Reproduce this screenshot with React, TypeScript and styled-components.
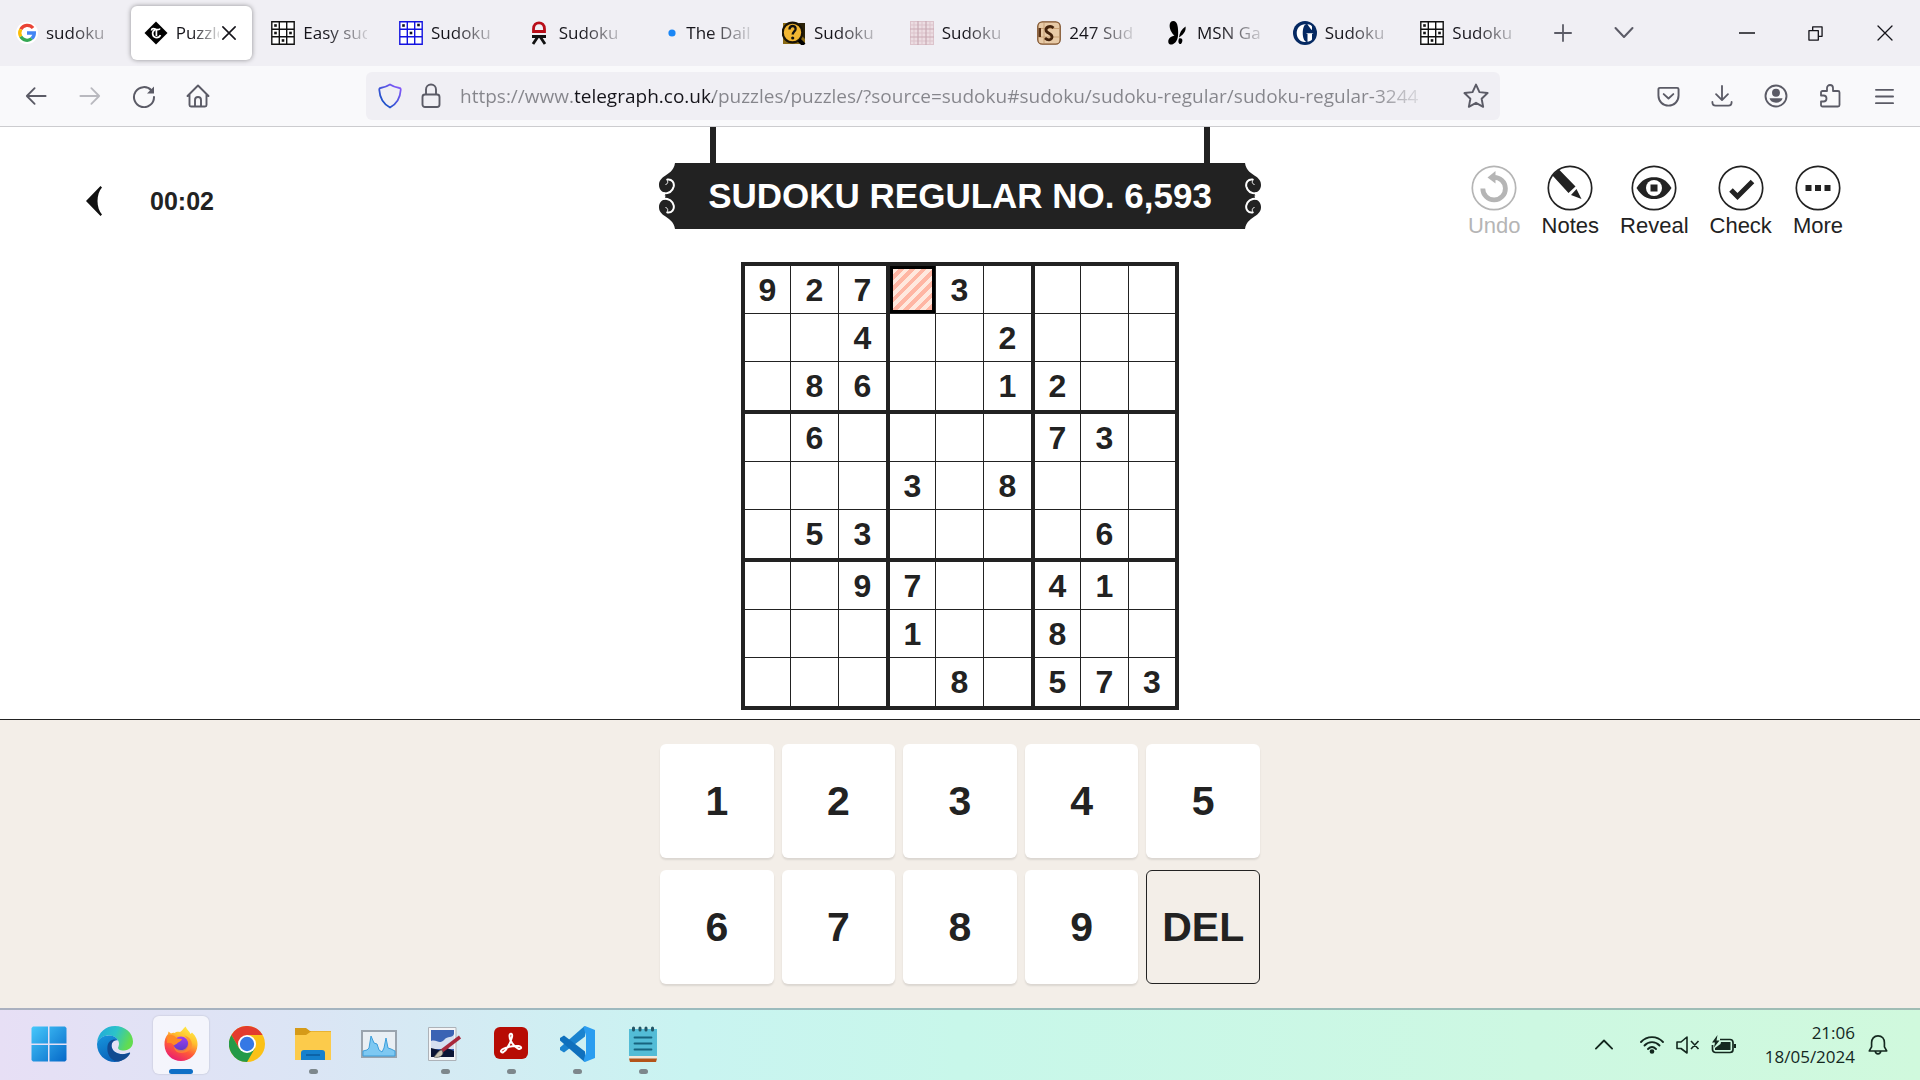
import React from "react";
import styled, { createGlobalStyle, css } from "styled-components";

const ui = `"Open Sans", "Noto Sans", sans-serif`;
const grotesk = `"Liberation Sans", Arial, sans-serif`;
const ink = "#222222";

const GlobalStyle = createGlobalStyle`
  * { box-sizing: border-box; }
  body { margin: 0; background: #fff; font-family: ${ui}; }
  button { font: inherit; color: inherit; background: none; border: 0; padding: 0; margin: 0; cursor: pointer; }
  svg { display: block; flex: none; }
`;

const Screen = styled.div`
  min-height: 100vh;
  display: flex;
  flex-direction: column;
`;

/* ---------- browser chrome ---------- */

const TabStrip = styled.header`
  height: 66px;
  display: flex;
  align-items: center;
  background: #f0eff4;
  color: #15141a;
`;

const Tabs = styled.nav`
  flex: 1;
  display: grid;
  grid-template-columns: repeat(12, minmax(0, 1fr));
`;

const Tab = styled.div<{ $active?: boolean }>`
  height: 54px;
  margin: 0 3px;
  padding: 0 13px;
  display: flex;
  align-items: center;
  border-radius: 6px;
  ${(p) => p.$active && css`
    background: #fff;
    box-shadow: 0 0 5px rgba(0, 0, 0, 0.4);
  `}
`;

const TabButton = styled.button`
  flex: 1;
  min-width: 0;
  height: 100%;
  display: flex;
  align-items: center;
  gap: 8px;
`;

const TabLabel = styled.span`
  flex: 1;
  overflow: hidden;
  white-space: nowrap;
  text-align: left;
  font-size: 17px;
  line-height: 24px;
  mask-image: linear-gradient(to right, #000 35%, rgba(0, 0, 0, 0.15));
`;

const CloseTab = styled.button`
  width: 20px;
  height: 24px;
  display: grid;
  place-items: center;
`;

const StripTools = styled.div`
  width: 122px;
  display: flex;
`;

const StripButton = styled.button`
  flex: 1;
  height: 48px;
  display: grid;
  place-items: center;
`;

const WindowControls = styled.div`
  width: 208px;
  margin-left: 58px;
  display: flex;
`;

const NavBar = styled.div`
  height: 61px;
  padding: 0 9px;
  display: grid;
  grid-template-columns: 357px minmax(0, 1fr) 411px;
  align-items: center;
  background: #f9f9fb;
  border-bottom: 1px solid #cccccf;
  color: #5b5b66;
`;

const NavGroup = styled.div<{ $end?: boolean }>`
  display: flex;
  justify-content: ${(p) => (p.$end ? "flex-end" : "flex-start")};
`;

const NavButton = styled.button<{ $dim?: boolean }>`
  width: 54px;
  height: 48px;
  display: grid;
  place-items: center;
  opacity: ${(p) => (p.$dim ? 0.4 : 1)};
`;

const UrlBar = styled.form`
  height: 48px;
  padding: 0 11px 0 12px;
  display: flex;
  align-items: center;
  gap: 19px;
  border-radius: 6px;
  background: #f0eff4;
`;

/* The host name is dark and the rest of the address grey, fading at the right edge. */
const UrlInput = styled.input`
  flex: 1;
  min-width: 0;
  height: 40px;
  padding: 0;
  border: 0;
  outline: 0;
  font-family: ${ui};
  font-size: 19px;
  color: transparent;
  background: linear-gradient(
    to right,
    #85858b 0 115px,
    #15141a 115px 253px,
    #85858b 253px calc(100% - 70px),
    rgba(133, 133, 139, 0.1) calc(100% - 20px)
  );
  background-clip: text;
`;

/* ---------- puzzle ---------- */

const Puzzle = styled.main`
  flex: 1;
  display: flex;
  flex-direction: column;
  align-items: center;
  background: #fff;
  color: ${ink};
  font-family: ${grotesk};
`;

const PuzzleHead = styled.div`
  width: 100%;
  padding: 0 77px;
  display: grid;
  grid-template-columns: minmax(0, 1fr) 602px minmax(0, 1fr);
`;

const HeadLeft = styled.div`
  height: 102px;
  padding-top: 46px;
  display: flex;
  align-items: center;
  gap: 39px;
`;

const BackButton = styled.button`
  width: 34px;
  height: 40px;
  display: grid;
  place-items: center;
`;

const Timer = styled.time`
  font-size: 25px;
  line-height: 32px;
  font-weight: 700;
`;

const Sign = styled.div`
  display: flex;
  flex-direction: column;
`;

const Hangers = styled.div`
  height: 36px;
  margin: 0 51px;
  border: solid ${ink};
  border-width: 0 6px;
`;

const Board = styled.div`
  height: 66px;
  display: flex;
`;

const SignTitle = styled.h1`
  flex: 1;
  margin: 0;
  background: ${ink};
  color: #fff;
  font-size: 35px;
  line-height: 66px;
  font-weight: 700;
  text-align: center;
  white-space: nowrap;
`;

const Tools = styled.div`
  display: flex;
  justify-content: flex-end;
  align-items: flex-start;
  gap: 21px;
  padding-top: 38px;
`;

const Tool = styled.button<{ $off?: boolean }>`
  display: flex;
  flex-direction: column;
  align-items: center;
  gap: 2px;
  font-size: 22px;
  line-height: 26px;
  color: ${(p) => (p.$off ? "#b5b5b5" : ink)};
`;

const Grid = styled.table`
  margin: 23px 0 9px;
  border: 4px solid ${ink};
  border-collapse: separate;
  border-spacing: 0;
`;

const Cell = styled.td<{ $col: number; $row: number }>`
  padding: 0;
  width: ${(p) => (p.$col === 8 ? 46 : [46, 48, 51][p.$col % 3])}px;
  height: ${(p) => (p.$row !== 8 && p.$row % 3 === 2 ? 52 : 48)}px;
  border: 0 solid ${ink};
  border-right-width: ${(p) => (p.$col === 8 ? 0 : p.$col % 3 === 2 ? 4 : 1)}px;
  border-bottom-width: ${(p) => (p.$row === 8 ? 0 : p.$row % 3 === 2 ? 4 : 1)}px;
`;

const CellButton = styled.button<{ $selected?: boolean }>`
  display: block;
  width: 100%;
  height: 100%;
  font-size: 32px;
  line-height: 36px;
  font-weight: 700;
  ${(p) => p.$selected && css`
    border: 3px solid #000;
    background: repeating-linear-gradient(135deg, #ffe8de 0 4px, #ffb5a3 4px 8px);
  `}
`;

const Keypad = styled.section`
  padding: 24px 0;
  display: flex;
  justify-content: center;
  border-top: 1px solid ${ink};
  background: #f3eee8;
`;

const Keys = styled.div`
  width: 600px;
  display: grid;
  grid-template-columns: repeat(5, minmax(0, 1fr));
  gap: 12px 8px;
`;

const Key = styled.button<{ $outline?: boolean }>`
  height: 114px;
  border-radius: 6px;
  font-family: ${grotesk};
  font-size: 41px;
  font-weight: 700;
  color: ${ink};
  background: #fff;
  box-shadow: 0 2px 2px rgba(0, 0, 0, 0.1);
  ${(p) => p.$outline && css`
    border: 1px solid ${ink};
    background: transparent;
    box-shadow: none;
  `}
`;

/* ---------- taskbar ---------- */

const Taskbar = styled.footer`
  height: 72px;
  padding: 0 24px 0 16px;
  display: flex;
  align-items: center;
  justify-content: space-between;
  border-top: 2px solid rgba(110, 130, 140, 0.5);
  background: linear-gradient(to right, #e7dff5 0, #dbe5f5 16%, #c9f4f1 36%, #c8f7ea 50%, #cdf8e2 80%, #d0f9dd 100%);
  color: #14281f;
`;

const Apps = styled.div`
  display: flex;
`;

const AppButton = styled.button<{ $current?: boolean }>`
  width: 56px;
  height: 58px;
  margin: 0 5px;
  padding-top: 10px;
  display: flex;
  flex-direction: column;
  align-items: center;
  justify-content: space-between;
  border-radius: 6px;
  ${(p) => p.$current && css`
    background: rgba(255, 255, 255, 0.65);
    box-shadow: 0 0 2px rgba(0, 0, 0, 0.2);
  `}
`;

const Mark = styled.span<{ $kind?: "dot" | "bar" }>`
  width: ${(p) => (p.$kind === "bar" ? 24 : 9)}px;
  height: 5px;
  border-radius: 3px;
  background: ${(p) => (p.$kind === "bar" ? "#0f6fc6" : p.$kind ? "#7d878c" : "transparent")};
`;

const Tray = styled.div`
  display: flex;
  align-items: center;
`;

const TrayButton = styled.button`
  width: 36px;
  height: 40px;
  display: grid;
  place-items: center;
`;

const Overflow = styled(TrayButton)`
  margin-right: 12px;
`;

const Clock = styled.button`
  width: 118px;
  padding-right: 5px;
  text-align: right;
  font-size: 17px;
  line-height: 24px;
`;

/* ---------- drawings ---------- */

const SudokuIcon = ({ color, dots }: { color: string; dots: number[][] }) => (
  <svg width="24" height="24" viewBox="0 0 24 24">
    <rect x="1" y="1" width="22" height="22" fill="#fff" />
    <path d="M.8.8H23.2V23.2H.8ZM8.3 1V23M15.7 1V23M1 8.3H23M1 15.7H23" fill="none" stroke={color} strokeWidth="1.4" />
    {dots.map(([x, y]) => <rect key={`${x}-${y}`} x={x - 1.3} y={y - 1.3} width="2.6" height="2.6" fill={color === "#111" ? color : "#112"} />)}
  </svg>
);
const gridDots = [[4.5, 4.5], [4.5, 12], [19.5, 12], [12, 19.5]];

const Google = () => (
  <svg width="22" height="24" viewBox="0 0 24 24">
    <circle cx="12" cy="12" r="12" fill="#fff" />
    <g fill="none" strokeWidth="3.6">
      <path d="M18.6 6.6A8 8 0 0 0 5.2 8" stroke="#ea4335" />
      <path d="M5.2 8A8 8 0 0 0 5.2 16" stroke="#fbbc05" />
      <path d="M5.2 16A8 8 0 0 0 17.2 18.1" stroke="#34a853" />
      <path d="M17.2 18.1A8 8 0 0 0 20 12H12" stroke="#4285f4" />
    </g>
  </svg>
);
const Telegraph = () => (
  <svg width="24" height="24" viewBox="0 0 24 24">
    <path d="M12 .5 23.5 12 12 23.5.5 12Z" fill="#000" />
    <path d="M7.5 9.5C7.5 7 10 7.6 12 8.4 14 9 15.5 8.6 16 7.5M11 9C8 10 7.5 15 11.5 16.5 14 17 15.6 16 16.4 14M12.4 9V15" fill="none" stroke="#fff" strokeWidth="1.7" />
  </svg>
);
const Dkm = () => (
  <svg width="24" height="24" viewBox="0 0 24 24">
    <path d="M6.500 10.500H17.500V8C17.500-.3 6.500-.3 6.500 8Z" fill="none" stroke="#b80d18" strokeWidth="2.800" />
    <path d="M5 15.500H19M11 15.500 6 23M13 15.500 18 23" fill="none" stroke="#111" strokeWidth="2.800" />
  </svg>
);
const Dot = () => <svg width="24" height="24" viewBox="0 0 24 24"><circle cx="18" cy="12" r="3.6" fill="#1a86f5" /></svg>;
const Question = () => (
  <svg width="24" height="24" viewBox="0 0 24 24">
    <path d="M1 2H23V23H1Z" fill="#8a6a14" />
    <path d="M17 2H23V18L19 14Z" fill="#2b2208" />
    <circle cx="10.500" cy="11.500" r="9.800" fill="#f2b632" stroke="#1a1408" strokeWidth="2.200" />
    <path d="M17 19 22 24" stroke="#000" strokeWidth="4" />
    <path d="M7.500 8.500C7.500 3.500 14.500 4 13.500 8.500 13 10.500 10.700 11 10.700 13.500" fill="none" stroke="#111" strokeWidth="2.400" />
    <circle cx="10.700" cy="17" r="1.600" fill="#111" />
  </svg>
);
const PinkGrid = () => (
  <svg width="24" height="24" viewBox="0 0 24 24">
    <path d="M0 0H24V24H0Z" fill="#ecdde2" />
    <path d="M0 .5H24M0 4H24M0 12H24M0 20H24M0 23.500H24M.5 0V24M4 0V24M12 0V24M20 0V24M23.500 0V24" stroke="#dcc3cb" />
    <path d="M0 8H24M0 16H24M8 0V24M16 0V24" stroke="#c9aab4" strokeWidth="1.200" />
  </svg>
);
const Tile247 = () => (
  <svg width="24" height="24" viewBox="0 0 24 24">
    <rect x=".8" y=".8" width="22.400" height="22.400" rx="4.500" fill="#e8caa6" stroke="#7d4f28" strokeWidth="1.300" />
    <path d="M2 7.500H22M2 16H22M7 2V22" stroke="#c9a075" />
    <path d="M1.500 7H4V16H1.500Z" fill="#5b3316" />
    <path d="M16.500 7C13 3.500 8 6.500 9.200 10 10.500 12.500 15.500 12.500 15 16.300 14.300 19.500 10.500 19.500 8 17" fill="none" stroke="#43220b" strokeWidth="2.800" />
  </svg>
);
const Butterfly = () => (
  <svg width="24" height="24" viewBox="0 0 24 24">
    <path d="M8.500 0C4 0 3.500 6 6.500 11 7.500 13 8.500 14 9.500 14.500 5 15.500 2.500 18.500 3.500 22 5.500 25.500 12 23 13 15 13.500 8 13 0 8.500 0ZM20.500 5.500C16.500 8 14.500 12 14 16.500 17 14.500 21.500 11 20.500 5.500ZM14 17.500C17.500 16.500 18.500 19.500 16 23 14 23.500 12.500 21 14 17.500Z" fill="#000" />
  </svg>
);
const Guardian = () => (
  <svg width="24" height="24" viewBox="0 0 24 24">
    <circle cx="12" cy="12" r="12" fill="#052962" />
    <path d="M13.500 3.300C8.500 3.300 8.600 20.500 13.500 20.700 8 22 3.700 17.500 3.700 12 3.700 6.500 8 2.500 13.500 3.300ZM14.500 3.300C17 3.500 18.500 4.600 19 5.500V8.700H18.300L14.500 3.600ZM12.800 12.300H20.500L19 13V18.500C18 19.800 16 20.700 14.500 20.700V13Z" fill="#fff" />
  </svg>
);

const Line = ({ d, w = 22, sw = 2, vb = 24, color = "currentColor" }: { d: string; w?: number; sw?: number; vb?: number; color?: string }) => (
  <svg width={w} height={w} viewBox={`0 0 ${vb} ${vb}`} fill="none" stroke={color} strokeWidth={sw} strokeLinecap="round" strokeLinejoin="round">
    <path d={d} />
  </svg>
);

const Shield = () => (
  <svg width="24" height="26" viewBox="0 0 24 26">
    <defs><linearGradient id="shield" x1="1" y1="0" x2="0" y2="1"><stop offset="0" stopColor="#9059ff" /><stop offset="1" stopColor="#0250bb" /></linearGradient></defs>
    <path d="M12 1.500C9 3.500 5.500 4.500 2.500 5 1.500 5 1.200 6 1.300 7 1.800 15 4.500 20.500 12 24.500 19.500 20.500 22.200 15 22.700 7 22.800 6 22.500 5 21.500 5 18.500 4.500 15 3.500 12 1.500Z" fill="none" stroke="url(#shield)" strokeWidth="1.800" />
  </svg>
);
const Lock = () => (
  <svg width="20" height="26" viewBox="0 0 20 26" fill="none" stroke="currentColor" strokeWidth="1.900">
    <rect x="1.500" y="11.500" width="17" height="12.500" rx="2.500" />
    <path d="M5 11.500V6.500A5 5 0 0 1 15 6.500V11.500" />
  </svg>
);
const Reload = () => (
  <svg width="24" height="24" viewBox="0 0 24 24" fill="none" stroke="currentColor" strokeWidth="2" strokeLinecap="round">
    <path d="M19.500 6.500A10 10 0 1 0 22 13" />
    <path d="M22 2.500V9.500H15Z" fill="currentColor" stroke="none" />
  </svg>
);
const Account = () => (
  <svg width="24" height="24" viewBox="0 0 24 24">
    <circle cx="12" cy="12" r="10.500" fill="none" stroke="currentColor" strokeWidth="1.900" />
    <circle cx="12" cy="8.800" r="4" fill="currentColor" />
    <path d="M5.500 14.300H18.500C18 17 15.500 18.700 12 18.700S6 17 5.500 14.300Z" fill="currentColor" />
  </svg>
);

const Scroll = ({ flip }: { flip?: boolean }) => (
  <svg width="16" height="66" viewBox="0 0 16 66">
    <g transform={flip ? "translate(16 0) scale(-1 1)" : undefined}>
      {[undefined, "translate(0 66) scale(1 -1)"].map((t, i) => (
        <g key={i} transform={t}>
          <path d="M16 0C15 8 9 10.500 5 13.500 1 16.500 0 19 0 22 0 26 2.500 29 6 29.500L5.500 33.200H16.200V0Z" fill={ink} />
          <path d="M8.500 16.500C13 16 15.500 19.500 14.700 23.500 13.500 28.500 9 31 2.500 30.500" fill="none" stroke="#fff" strokeWidth="2" strokeLinecap="round" />
          <path d="M7.500 16.500C9.500 18.500 9 21 6.500 21.500" fill="none" stroke="#fff" strokeWidth="1" />
          <path d="M0 29.500H5.500L6.500 33H0Z" fill="#fff" />
        </g>
      ))}
    </g>
  </svg>
);

const ToolIcon = ({ children }: { children: React.ReactNode }) => (
  <svg width="46" height="46" viewBox="0 0 46 46">
    <circle cx="23" cy="23" r="21.700" fill="none" stroke="currentColor" strokeWidth="1.700" />
    {children}
  </svg>
);

const tools = [
  { name: "Undo", off: true, art: <><path d="M11.800 23.500A11.300 11.300 0 1 0 22.500 12.300" fill="none" stroke="currentColor" strokeWidth="4.800" /><path d="M16.500 12.500 24.500 6V18.500Z" fill="currentColor" /></> },
  { name: "Notes", art: <><path d="M5.500 10.500 12 4.500 28.500 21.500 21.500 28Z M24 30 29.500 24 34.500 34Z" fill="currentColor" /></> },
  { name: "Reveal", art: <><path d="M5.500 23C11 14.500 16 12.300 23 12.300S35 14.500 40.500 23C35 31.500 30 34 23 34S11 31.500 5.500 23Z" fill="currentColor" /><circle cx="23" cy="23" r="8" fill="#fff" /><rect x="19.500" y="19.500" width="7" height="7" fill="currentColor" /></> },
  { name: "Check", art: <path d="M13 25 19.500 31.500 34.500 16.500" fill="none" stroke="currentColor" strokeWidth="5" /> },
  { name: "More", art: <path d="M10.500 20H16.500V26H10.500ZM20 20H26V26H20ZM29.500 20H35.500V26H29.500Z" fill="currentColor" /> },
];

const Windows = () => (
  <svg width="36" height="36" viewBox="0 0 36 36">
    <defs><linearGradient id="win" x1="0" y1="0" x2="1" y2="1"><stop offset="0" stopColor="#46c8fb" /><stop offset="1" stopColor="#0568c8" /></linearGradient></defs>
    <path d="M2 .5H17V17.500H.5V2ZM18.500.5H34L35.500 2V17.500H18.500ZM.5 19H17V35.500H2L.5 34ZM18.500 19H35.500V34L34 35.500H18.500Z" fill="url(#win)" />
  </svg>
);
const Edge = () => (
  <svg width="36" height="36" viewBox="0 0 36 36">
    <defs>
      <linearGradient id="e1" x1="0" y1="0" x2="1" y2=".3"><stop offset="0" stopColor="#1fa5dd" /><stop offset=".55" stopColor="#2cc3c9" /><stop offset="1" stopColor="#62dc50" /></linearGradient>
      <linearGradient id="e2" x1="0" y1="0" x2=".5" y2="1"><stop offset="0" stopColor="#1896dd" /><stop offset="1" stopColor="#0860b8" /></linearGradient>
    </defs>
    <path d="M0 17C1 6 9 0 18 0 28 0 36 7 36 15.500 36 21 32 24.500 27 24.500 22.500 24.500 20 23 21.500 20.500 23.500 16 20 10 13 9.500 7 9.300 2 12 0 17Z" fill="url(#e1)" />
    <path d="M0 18C1 12 7 9 13 9.500 18 10 20.500 12.500 21 14.500 16 13 13.500 18 15 22 17 28 26 30 32.500 26.500 29 33 23 36 18 36 8 36 0 28.500 0 18Z" fill="url(#e2)" />
    <path d="M10.500 20C11.500 14 17 12.500 20 14 16 14 13.500 18 15 22 17 28 26 30 32.500 26.500 33.500 26.500 33.200 27.500 32.500 28.500 28.500 34 23 35.500 20 35.500 13 34 9.500 27.500 10.500 20Z" fill="#114a91" />
  </svg>
);
const Firefox = () => (
  <svg width="36" height="36" viewBox="0 0 36 36">
    <defs>
      <linearGradient id="f1" x1=".8" y1="0" x2=".3" y2="1"><stop offset="0" stopColor="#fff14a" /><stop offset=".35" stopColor="#ffc02d" /><stop offset=".65" stopColor="#ff5a38" /><stop offset="1" stopColor="#e81a75" /></linearGradient>
      <linearGradient id="f2" x1="0" y1="0" x2="0" y2="1"><stop offset="0" stopColor="#a13df0" /><stop offset="1" stopColor="#5a3bc8" /></linearGradient>
    </defs>
    <path d="M1.500 19C1.300 14.500 2.500 10.500 5 8L5.500 5.500 8 7.500C9 6.800 10.500 6.500 11.500 7 13 6 14.500 5.500 17 6 18.500 5.500 20 3 22.500.5 24 4 26.500 5 27.500 8L29 6.500C33 10 34.800 15 34.500 19 34 28.500 27 35 18 35S2 28.500 1.500 19Z" fill="url(#f1)" />
    <circle cx="18" cy="18" r="7.500" fill="url(#f2)" />
    <path d="M4.500 9.500C9 8 12 10 14 12.500L19 13C18.500 15.500 15.500 16 14.500 17 14 18.500 12 18 11 19.500 9 17 7 16.500 4 17Z" fill="#ff8a24" />
    <path d="M11 20C13 24.500 20 25.500 23 22 27 18 24.500 12 21 9.500 27 11 29 15 29 19 28 26 20 28 15 26.500 12.500 25.500 11 23 11 20Z" fill="#ff8c30" opacity=".75" />
  </svg>
);
const Chrome = () => (
  <svg width="36" height="36" viewBox="0 0 36 36">
    <circle cx="18" cy="18" r="18" fill="#fbc116" />
    <path d="M2.400 9A18 18 0 0 1 33.600 9H18L10.200 22.500Z" fill="#e33b2e" />
    <path d="M2.400 9A18 18 0 0 0 18 36L25.800 22.500 10.200 22.500Z" fill="#249a48" />
    <circle cx="18" cy="18" r="9" fill="#fff" />
    <circle cx="18" cy="18" r="7.200" fill="#3578e5" />
  </svg>
);
const Folder = () => (
  <svg width="36" height="36" viewBox="0 0 36 36">
    <path d="M0 2H11L15 5H36V12H0Z" fill="#d59a18" />
    <path d="M0 9H11L16 5.500H36V34H0Z" fill="#fccb4b" />
    <path d="M6 34V27A3 3 0 0 1 9 24H27A3 3 0 0 1 30 27V34Z" fill="#1580cc" />
    <path d="M11 29H25" stroke="#0a5a9c" strokeWidth="1.500" />
  </svg>
);
const Monitor = () => (
  <svg width="36" height="36" viewBox="0 0 36 36">
    <path d="M1 5H35V31H1Z" fill="#e9eff4" stroke="#9aa4ae" strokeWidth="2" />
    <path d="M2 25 6 24 8 22 10 10 13 17 16 18 18 24 21 26 23 22 25 12 27 22 30 23 34 25V30H2Z" fill="#7dc8f2" stroke="#3c9edb" />
  </svg>
);
const Paint = () => (
  <svg width="36" height="36" viewBox="0 0 36 36">
    <path d="M1.500 1.500H29V34.500H1.500Z" fill="#f3f4f6" stroke="#adb2b8" />
    <path d="M4 4H27V31H4Z" fill="#3b63b4" />
    <path d="M4 15C10 13 12 19 17 14 21 9 25 13 27 8V23H4Z" fill="#d5dff0" />
    <path d="M4 22 12 24 20 22 27 25V31H4Z" fill="#0c1534" />
    <path d="M33 11 14 25.500" stroke="#a8283c" strokeWidth="3.500" />
    <path d="M15 24C12 24 10.500 27 7 31 11 32 15 31 16 27Z" fill="#c9c3b2" stroke="#555" strokeWidth=".7" />
  </svg>
);
const Acrobat = () => (
  <svg width="36" height="36" viewBox="0 0 36 36">
    <rect x="1" y="1" width="34" height="32" rx="6" fill="#b70c04" />
    <path d="M8 25.500C7 23 17 19.500 25.500 20 30 21 28 24 25 22.500 20.500 20.500 16.500 14 16.500 10 16.500 6.500 20 7 19 11 17.500 17.500 13 24.500 10.500 26 9.500 26.500 8.500 26.500 8 25.500Z" fill="none" stroke="#fff" strokeWidth="2" />
  </svg>
);
const VsCode = () => (
  <svg width="36" height="36" viewBox="0 0 36 36">
    <path d="M26 .5V10.500L5 26.500 1 24V21.500L25 .5Z" fill="#1a83cf" />
    <path d="M26 35.500V25.500L5 9.500 1 12V14.500L25 35.500Z" fill="#0f70bd" />
    <path d="M26 0 36 4V32L26 36 24.500 35 27 26V10L24.500 1Z" fill="#2b9df0" />
  </svg>
);
const Notepad = () => (
  <svg width="36" height="36" viewBox="0 0 36 36">
    <path d="M4 3H32V31H4Z" fill="#53bcd6" />
    <path d="M4 30H32V32.500H4Z" fill="#f4e7d8" />
    <path d="M4 32.500H32L31 36H5Z" fill="#b3541a" />
    <path d="M9.500 11.500H26.500M9.500 17.500H26.500M9.500 23.500H26.500" stroke="#17637e" strokeWidth="1.800" strokeLinecap="round" />
    <path d="M8.500 2V4M15 2V4M21 2V4M27.500 2V4" stroke="#235566" strokeWidth="3" strokeLinecap="round" />
  </svg>
);

const Wifi = () => (
  <svg width="26" height="22" viewBox="0 0 26 22" fill="none" stroke="currentColor" strokeWidth="1.900" strokeLinecap="round">
    <path d="M2 8C8 1.500 18 1.500 24 8M5.500 11.500C9.500 7 16.500 7 20.500 11.500M9 15C11.500 12.500 14.500 12.500 17 15" />
    <circle cx="13" cy="17.500" r="1.400" fill="currentColor" />
  </svg>
);
const Muted = () => (
  <svg width="26" height="20" viewBox="0 0 26 20" fill="none" stroke="currentColor" strokeWidth="1.600" strokeLinejoin="round">
    <path d="M2 7H6L12 2V18L6 13.500H2ZM16 6 23.500 14M23.500 6 16 14" />
  </svg>
);
const Battery = () => (
  <svg width="26" height="20" viewBox="0 0 26 20">
    <path d="M9 4.500H19A3 3 0 0 1 22 7.500V14.500A3 3 0 0 1 19 17.500H4.500A3 3 0 0 1 1.500 14.500V10" fill="none" stroke="currentColor" strokeWidth="1.700" />
    <path d="M10 7H19.500V15H4V13L9.500 9ZM23 9H25V13H23ZM6.500 0 1 7.500H4L3 12.500 8.500 5.500H5.500Z" fill="currentColor" />
  </svg>
);

/* ---------- data ---------- */

const tabs = [
  { label: "sudoku", icon: <Google /> },
  { label: "Puzzles", icon: <Telegraph />, active: true },
  { label: "Easy sudoku", icon: <SudokuIcon color="#111" dots={gridDots} /> },
  { label: "Sudoku", icon: <SudokuIcon color="#1313e0" dots={[[4.5, 4.5], [19.5, 4], [12, 12]]} /> },
  { label: "Sudoku", icon: <Dkm /> },
  { label: "The Daily", icon: <Dot /> },
  { label: "Sudoku", icon: <Question /> },
  { label: "Sudoku", icon: <PinkGrid /> },
  { label: "247 Sudoku", icon: <Tile247 /> },
  { label: "MSN Games", icon: <Butterfly /> },
  { label: "Sudoku", icon: <Guardian /> },
  { label: "Sudoku", icon: <SudokuIcon color="#111" dots={gridDots} /> },
];

const rows = [
  "927.3....",
  "..4..2...",
  ".86..12..",
  ".6....73.",
  "...3.8...",
  ".53....6.",
  "..97..41.",
  "...1..8..",
  "....8.573",
];

const apps: { name: string; art: React.ReactNode; mark?: "dot" | "bar" }[] = [
  { name: "Start", art: <Windows /> },
  { name: "Edge", art: <Edge /> },
  { name: "Firefox", art: <Firefox />, mark: "bar" },
  { name: "Chrome", art: <Chrome /> },
  { name: "File Explorer", art: <Folder />, mark: "dot" },
  { name: "Resource Monitor", art: <Monitor /> },
  { name: "Paint", art: <Paint />, mark: "dot" },
  { name: "Acrobat", art: <Acrobat />, mark: "dot" },
  { name: "Visual Studio Code", art: <VsCode />, mark: "dot" },
  { name: "Notepad", art: <Notepad />, mark: "dot" },
];

export default function App() {
  return (
    <Screen>
      <GlobalStyle />
      <TabStrip>
        <Tabs aria-label="Tabs">
          {tabs.map((t, i) => (
            <Tab key={i} $active={t.active}>
              <TabButton>
                {t.icon}
                <TabLabel>{t.label}</TabLabel>
              </TabButton>
              {t.active && <CloseTab aria-label="Close tab"><Line d="M1 1 15 15M15 1 1 15" w={14} vb={16} sw={1.8} /></CloseTab>}
            </Tab>
          ))}
        </Tabs>
        <StripTools>
          <StripButton aria-label="New tab"><Line d="M10 1V19M1 10H19" w={18} vb={20} color="#5b5b66" /></StripButton>
          <StripButton aria-label="List all tabs"><Line d="M1.500 5 10 14 18.500 5" w={20} vb={20} color="#5b5b66" /></StripButton>
        </StripTools>
        <WindowControls>
          <StripButton aria-label="Minimise"><Line d="M0 8H16" w={16} vb={16} sw={1.3} /></StripButton>
          <StripButton aria-label="Restore"><Line d="M1 5H11V15H1ZM5 5V1H15V11H11" w={15} vb={16} sw={1.4} /></StripButton>
          <StripButton aria-label="Close"><Line d="M1 1 15 15M15 1 1 15" w={16} vb={16} sw={1.3} /></StripButton>
        </WindowControls>
      </TabStrip>
      <NavBar>
        <NavGroup>
          <NavButton aria-label="Back"><Line d="M22.500 12H2M10.500 3.500 2 12 10.500 20.500" /></NavButton>
          <NavButton aria-label="Forward" $dim><Line d="M1.500 12H22M13.500 3.500 22 12 13.500 20.500" /></NavButton>
          <NavButton aria-label="Reload"><Reload /></NavButton>
          <NavButton aria-label="Home"><Line d="M1.500 12 12 1.500 22.500 12M3.500 10.500V21A1.500 1.500 0 0 0 5 22.500H19A1.500 1.500 0 0 0 20.500 21V10.500M9 22V16A3 3 0 0 1 15 16V22" w={24} sw={1.9} /></NavButton>
        </NavGroup>
        <UrlBar>
          <Shield />
          <Lock />
          <UrlInput
            aria-label="Address"
            readOnly
            value="https://www.telegraph.co.uk/puzzles/puzzles/?source=sudoku#sudoku/sudoku-regular/sudoku-regular-3244"
          />
          <Line d="M12 1.500 15.200 8.400 22.700 9.300 17.200 14.500 18.600 22 12 18.300 5.400 22 6.800 14.500 1.300 9.300 8.800 8.400Z" w={26} sw={1.8} />
        </UrlBar>
        <NavGroup $end>
          <NavButton aria-label="Save to Pocket"><Line d="M3 3H21A1.500 1.500 0 0 1 22.500 4.500V11C22.500 17 18 21.500 12 21.500S1.500 17 1.500 11V4.500A1.500 1.500 0 0 1 3 3ZM7 9.500 12 14 17 9.500" w={23} /></NavButton>
          <NavButton aria-label="Downloads"><Line d="M12 1V16M5.500 10 12 16.500 18.500 10M1.500 18.500C1.500 21.500 2.500 22.500 5 22.500H19C21.500 22.500 22.500 21.500 22.500 18.500" w={22} /></NavButton>
          <NavButton aria-label="Account"><Account /></NavButton>
          <NavButton aria-label="Extensions"><Line d="M9 7V4A3 3 0 0 1 15 4V7H20A1.500 1.500 0 0 1 21.500 8.500V21A1.500 1.500 0 0 1 20 22.500H4.500A1.500 1.500 0 0 1 3 21V17.500H5.500A3 3 0 0 0 5.500 11.500H3V8.500A1.500 1.500 0 0 1 4.500 7Z" w={24} sw={1.8} /></NavButton>
          <NavButton aria-label="Menu"><Line d="M1 3H19M1 10H19M1 17H19" w={19} vb={20} /></NavButton>
        </NavGroup>
      </NavBar>

      <Puzzle>
        <PuzzleHead>
          <HeadLeft>
            <BackButton aria-label="Back to puzzles">
              <svg width="16" height="30" viewBox="0 0 16 30"><path d="M0 15 14.500 0 16 1.500C10 8 10 22 16 28.500L14.500 30Z" fill="#111" /></svg>
            </BackButton>
            <Timer>00:02</Timer>
          </HeadLeft>
          <Sign>
            <Hangers />
            <Board>
              <Scroll />
              <SignTitle>SUDOKU REGULAR NO. 6,593</SignTitle>
              <Scroll flip />
            </Board>
          </Sign>
          <Tools>
            {tools.map((t) => (
              <Tool key={t.name} $off={t.off} disabled={t.off}>
                <ToolIcon>{t.art}</ToolIcon>
                {t.name}
              </Tool>
            ))}
          </Tools>
        </PuzzleHead>
        <Grid aria-label="Sudoku">
          <tbody>
            {rows.map((line, r) => (
              <tr key={r}>
                {[...line].map((n, c) => (
                  <Cell key={c} $row={r} $col={c}>
                    <CellButton $selected={r === 0 && c === 3} aria-label={`Row ${r + 1}, column ${c + 1}`}>
                      {n === "." ? "" : n}
                    </CellButton>
                  </Cell>
                ))}
              </tr>
            ))}
          </tbody>
        </Grid>
      </Puzzle>
      <Keypad aria-label="Number keys">
        <Keys>
          {["1", "2", "3", "4", "5", "6", "7", "8", "9", "DEL"].map((k) => (
            <Key key={k} $outline={k === "DEL"}>{k}</Key>
          ))}
        </Keys>
      </Keypad>

      <Taskbar>
        <Apps>
          {apps.map((a) => (
            <AppButton key={a.name} aria-label={a.name} $current={a.mark === "bar"}>
              {a.art}
              <Mark $kind={a.mark} />
            </AppButton>
          ))}
        </Apps>
        <Tray>
          <Overflow aria-label="Show hidden icons"><Line d="M1 14 10 5 19 14" w={18} vb={20} /></Overflow>
          <TrayButton aria-label="Network"><Wifi /></TrayButton>
          <TrayButton aria-label="Volume"><Muted /></TrayButton>
          <TrayButton aria-label="Battery"><Battery /></TrayButton>
          <Clock>21:06<br />18/05/2024</Clock>
          <TrayButton aria-label="Notifications"><Line d="M12 2C7.500 2 5 5.500 5 9.500V14L2.500 18.500H21.500L19 14V9.500C19 5.500 16.500 2 12 2ZM9 19C9.500 22.500 14.500 22.500 15 19" w={22} sw={1.8} /></TrayButton>
        </Tray>
      </Taskbar>
    </Screen>
  );
}
